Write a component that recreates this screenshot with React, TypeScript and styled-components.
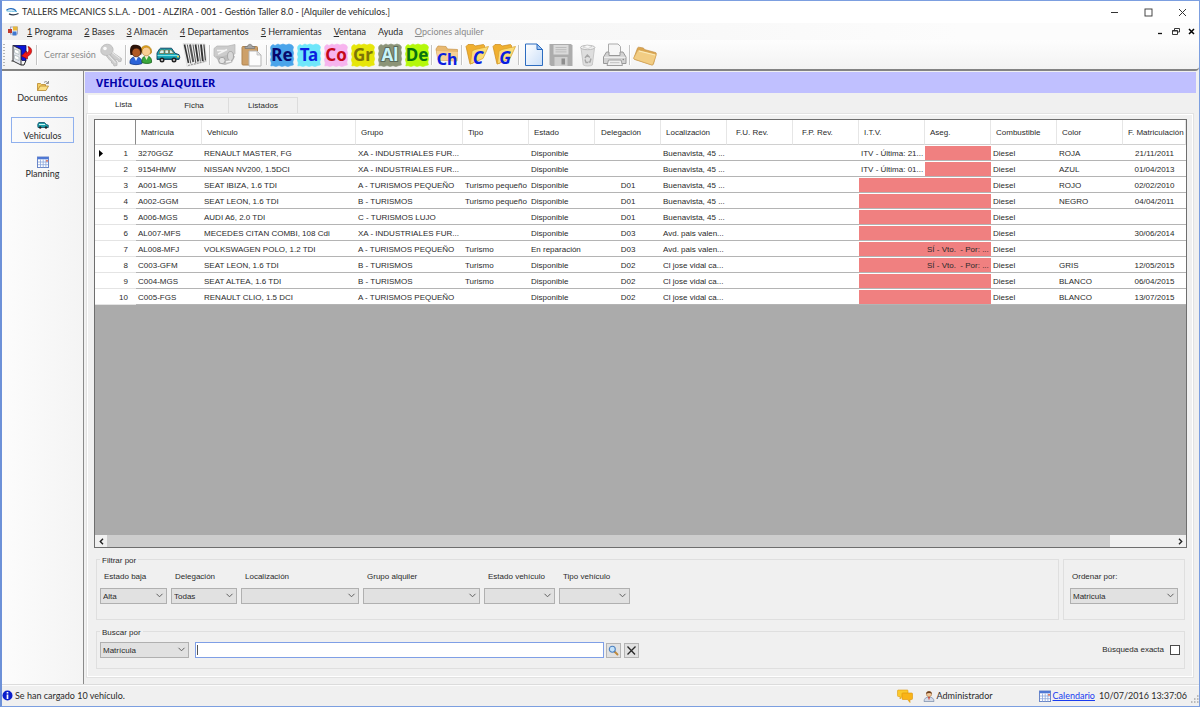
import React from "react";
import styled, { createGlobalStyle } from "styled-components";

const UI = '"Segoe UI", Lato, "Noto Sans", sans-serif';
const GRID = '"Microsoft Sans Serif", "Liberation Sans", Arial, sans-serif';
const COMIC = '"Comic Sans MS", "Noto Sans", sans-serif';

const GlobalStyle = createGlobalStyle`
  * { box-sizing: border-box; }
  body { margin: 0; background: #f0f0f0; color: #2a2a2a; font: 8px/12px ${GRID}; }
  button, input, select { font: inherit; color: inherit; margin: 0; }
  svg { display: block; overflow: visible; }
`;

const Window = styled.div`
  min-height: 100vh;
  display: flex;
  flex-direction: column;
  background: #f0f0f0;
  border: 1px solid #7c9fe0;
  border-left: 2px solid #6d91d8;
`;

/* ---------- title bar and menu ---------- */

const TitleBar = styled.header`
  height: 22px;
  display: flex;
  align-items: center;
  gap: 3px;
  padding-left: 4px;
  background: #fff;
  font-family: ${UI};
  font-size: 9px;
`;

const WindowTitle = styled.h1`
  flex: 1;
  margin: 0;
  font: inherit;
  white-space: nowrap;
`;

const Controls = styled.div<{ $gap: number; $pad: number }>`
  display: flex;
  align-items: center;
  gap: ${(p) => p.$gap}px;
  padding-right: ${(p) => p.$pad}px;
`;

const PlainButton = styled.button`
  display: flex;
  align-items: center;
  justify-content: center;
  padding: 0;
  border: 0;
  background: none;
`;

const MenuBar = styled.nav`
  height: 17px;
  display: flex;
  align-items: center;
  padding-left: 5px;
  background: linear-gradient(90deg, #f0f0f0, #fcfcfc 80%);
  font-family: ${UI};
  font-size: 9px;
`;

const MenuList = styled.div`
  flex: 1;
  display: flex;
  gap: 12px;
  padding-left: 8px;
`;

const MenuItem = styled.button`
  padding: 0;
  border: 0;
  background: none;
  white-space: nowrap;
  &:disabled { color: #8a8a8a; }
`;

/* ---------- toolbar ---------- */

const Toolbar = styled.div`
  height: 31px;
  display: flex;
  align-items: center;
  background: linear-gradient(#fdfdfd, #f3f3f3);
  border-bottom: 2px solid #838383;
  border-bottom-right-radius: 4px;
  font-family: ${UI};
  font-size: 9px;
`;

const Grip = styled.div`
  width: 2px;
  height: 22px;
  margin: 0 5px 0 1px;
  background: repeating-linear-gradient(#b4b4b4 0 1px, transparent 1px 3px);
`;

const ToolGroup = styled.div`
  display: flex;
  align-items: center;
  gap: 3px;
`;

const ToolButton = styled(PlainButton)`
  width: 24px;
  height: 26px;
`;

const ToolText = styled.button`
  padding: 0 3px 0 4px;
  border: 0;
  background: none;
  white-space: nowrap;
  &:disabled { color: #8a8a8a; }
`;

const Separator = styled.div`
  width: 2px;
  height: 20px;
  margin: 0 2px;
  background: #c4c4c4;
  border-right: 1px solid #fff;
`;

/* ---------- body ---------- */

const Body = styled.div`
  flex: 1;
  display: flex;
`;

const Sidebar = styled.nav`
  width: 82px;
  display: flex;
  flex-direction: column;
  gap: 12px;
  padding: 8px 9px;
  background: linear-gradient(90deg, #fcfcfc, #f4f4f4);
  border-right: 1px solid #8a8a8a;
  font-family: ${UI};
  font-size: 9px;
`;

const SideItem = styled.button<{ $active?: boolean }>`
  height: 26px;
  display: flex;
  flex-direction: column;
  align-items: center;
  justify-content: flex-end;
  padding: 0;
  border: 1px solid ${(p) => (p.$active ? "#8fb0ee" : "transparent")};
  background: none;
`;

const Main = styled.main`
  flex: 1;
  min-width: 0;
  display: flex;
  flex-direction: column;
  padding: 0 3px 7px 0;
`;

const Banner = styled.h2`
  height: 21px;
  display: flex;
  align-items: center;
  margin: 1px 0 2px 1px;
  padding-left: 11px;
  background: #c0c0ff;
  color: #0000a8;
  font: bold 11px/20px ${COMIC};
`;

const Tabs = styled.div`
  display: flex;
  align-items: flex-end;
  padding-left: 4px;
`;

const Tab = styled.button<{ $active?: boolean }>`
  width: ${(p) => (p.$active ? 72 : 69)}px;
  height: ${(p) => (p.$active ? 19 : 17)}px;
  padding: 0 0 ${(p) => (p.$active ? 1 : 0)}px;
  border: 1px solid ${(p) => (p.$active ? "#fff" : "#dcdcdc")};
  border-width: 1px 1px 0 0;
  background: ${(p) => (p.$active ? "#fff" : "#f0f0f0")};
`;

const TabPanel = styled.section`
  flex: 1;
  display: flex;
  flex-direction: column;
  gap: 11px;
  margin: 0 3px;
  padding: 4px 5px 7px 6px;
  border: 1px solid #fff;
  outline: 1px solid #e2e2e2;
`;

/* ---------- grid ---------- */

const GridBox = styled.div`
  flex: 1;
  display: flex;
  flex-direction: column;
  background: #ababab;
  border: 1px solid #6e6e6e;
`;

const GridBody = styled.div`
  flex: 1;
  overflow: hidden;
`;

const Table = styled.table`
  width: 100%;
  table-layout: fixed;
  border-collapse: separate;
  border-spacing: 0;
  background: #fff;
`;

const HeadCell = styled.th<{ $pad?: number }>`
  height: 25px;
  padding: 2px 0 0 ${(p) => p.$pad ?? 5}px;
  border-right: 1px solid #e6e6e6;
  border-bottom: 1px solid #d0d0d0;
  font-weight: normal;
  text-align: left;
  white-space: nowrap;
  overflow: hidden;
`;

const CornerCell = styled.td`
  border-right: 1px solid #8a8a8a;
  border-bottom: 1px solid #d0d0d0;
`;

const RowHead = styled.th`
  height: 16px;
  padding: 2px 0 0;
  border-bottom: 1px solid #e4e4e4;
  font-weight: normal;
`;

const RowHeadInner = styled.div`
  display: flex;
  align-items: center;
  justify-content: space-between;
  padding: 0 8px 0 4px;
`;

const Cell = styled.td<{ $center?: boolean; $alert?: boolean }>`
  height: 16px;
  padding: 2px 0 0 ${(p) => (p.$center ? 0 : 2)}px;
  border-bottom: 1px solid #b4b4b4;
  background: ${(p) => (p.$alert ? "#f08080" : "#fff")};
  background-clip: padding-box;
  box-shadow: inset 0 1px #fff;
  text-align: ${(p) => (p.$center ? "center" : "left")};
  white-space: pre;
  overflow: hidden;
`;

const ScrollBar = styled.div`
  height: 12px;
  display: flex;
  background: #f0f0f0;
`;

const ScrollArrow = styled(PlainButton)`
  width: 12px;
`;

const ScrollTrack = styled.div`
  flex: 1;
  display: flex;
`;

const ScrollThumb = styled.div`
  width: 94%;
  background: #cdcdcd;
`;

/* ---------- filter forms ---------- */

const FilterRow = styled.div`
  display: flex;
  gap: 4px;
  padding: 0 2px;
`;

const Group = styled.fieldset<{ $grow?: boolean }>`
  position: relative;
  flex: ${(p) => (p.$grow ? "1" : "none")};
  min-width: 0;
  margin: 0;
  border: 1px solid #dfdfdf;
  padding: 0 3px;
`;

const Legend = styled.legend`
  height: 0;
  padding: 0;
  margin-left: 1px;
`;

const LegendText = styled.span`
  position: absolute;
  top: -5px;
  left: 3px;
  padding: 0 2px;
  background: #f0f0f0;
`;

const FilterFields = styled.div`
  height: 59px;
  display: flex;
  gap: 4px;
  padding-top: 11px;
`;

const SearchFields = styled.div`
  height: 36px;
  display: flex;
  align-items: center;
  gap: 4px;
`;

const OrderFields = styled(FilterFields)`
  padding-left: 3px;
`;

const Field = styled.div<{ $w: number }>`
  width: ${(p) => p.$w}px;
  display: flex;
  flex-direction: column;
  gap: 5px;
`;

const FieldLabel = styled.label<{ $pad?: number }>`
  padding-left: ${(p) => p.$pad ?? 4}px;
  white-space: nowrap;
`;

const SelectWrap = styled.div<{ $w: number }>`
  position: relative;
  width: ${(p) => p.$w}px;
  svg { position: absolute; right: 4px; top: 5px; pointer-events: none; }
`;

const Select = styled.select`
  appearance: none;
  display: block;
  width: 100%;
  height: 16px;
  padding: 1px 14px 0 2px;
  border: 1px solid #b0b0b0;
  border-radius: 0;
  background: #e1e1e1;
`;

const SearchBox = styled.div`
  position: relative;
  width: 409px;
  margin-left: 2px;
  &::after {
    content: "";
    position: absolute;
    left: 2px;
    top: 3px;
    width: 1px;
    height: 10px;
    background: #555;
  }
`;

const SearchInput = styled.input`
  display: block;
  width: 100%;
  height: 16px;
  padding: 0 4px;
  border: 1px solid #7f9fe6;
  background: #fff;
  outline: none;
`;

const SearchButtons = styled.div`
  display: flex;
  gap: 3px;
  margin-left: -2px;
`;

const SmallButton = styled(PlainButton)`
  width: 15px;
  height: 15px;
  border: 1px solid #b4b4b4;
  background: #e1e1e1;
`;

const ExactLabel = styled.label`
  display: flex;
  align-items: center;
  gap: 6px;
  margin: 0 1px 0 auto;
  white-space: nowrap;
`;

const CheckBox = styled.input`
  appearance: none;
  width: 10px;
  height: 10px;
  border: 1px solid #4a4a4a;
  background: #fff;
`;

/* ---------- status bar ---------- */

const StatusBar = styled.footer`
  height: 22px;
  display: flex;
  align-items: center;
  border-top: 1px solid #dcdcdc;
  box-shadow: inset 0 1px #fcfcfc;
  font-family: ${UI};
  font-size: 9px;
  white-space: nowrap;
`;

const StatusItem = styled.div<{ $gap?: number }>`
  display: flex;
  align-items: center;
  gap: 2px;
  margin-right: ${(p) => p.$gap ?? 0}px;
  a { color: #1a3cf0; }
`;

const StatusSpacer = styled.div`
  flex: 1;
`;

const SizeGrip = styled.div`
  align-self: flex-end;
  padding: 0 0 2px 3px;
`;

/* ---------- icons ---------- */

const Svg = ({ s = 24, h, children, vb }: { s?: number; h?: number; vb?: string; children: React.ReactNode }) => (
  <svg width={s} height={h ?? s} viewBox={vb ?? `0 0 ${s} ${h ?? s}`} aria-hidden="true">
    {children}
  </svg>
);

const Chevron = () => (
  <svg width="7" height="5" viewBox="0 0 7 5" aria-hidden="true">
    <path d="M.5 .8 3.5 3.8 6.5 .8" fill="none" stroke="#606060" />
  </svg>
);

const AppLogo = () => (
  <Svg s={13} h={10}>
    <path d="M.5 3.200C3 1.200 7 1 10 3.800" fill="none" stroke="#1d66b8" strokeWidth="1.300" />
    <path d="M.5 3.800C3 4.500 8 4 11 4.500" fill="none" stroke="#57b4dd" strokeWidth="1" />
    <path d="M3 6.800c3 1.500 6 1.300 9.500-.3" fill="none" stroke="#25364c" strokeWidth="1.300" />
  </Svg>
);

const FormIcon = () => (
  <Svg s={12} h={11}>
    <rect x="3.500" y="1" width="7" height="7" fill="#eef3fb" stroke="#9a9ab0" strokeWidth=".8" />
    <rect x="6" y=".5" width="4.500" height="4" fill="#e8b83c" />
    <rect x="1" y="3" width="4" height="4" fill="#c0392b" />
    <rect x="5.500" y="5.500" width="4" height="4" fill="#3f78d0" />
  </Svg>
);

const DoorIcon = () => (
  <Svg>
    <path d="M3 2.500h13v15h-4z" fill="#0a14d8" stroke="#0a0a5a" strokeWidth=".8" />
    <path d="M3 2.500 11 6.500V22L3 18z" fill="#e4e6ee" stroke="#222" strokeWidth=".9" />
    <path d="M4.500 6l4.500 2v3.500L4.500 9.500zM4.500 12l4.500 2v3.500l-4.500-2z" fill="#fff" stroke="#9aa" strokeWidth=".6" />
    <path d="M3 18h-1.500M11 22h3l2-4.500" fill="none" stroke="#222" />
    <path d="M18 3.500c4.500 1 5.500 7-.5 10v2.500L11.500 13l5-5v2.300c2.500-1.200 3-3.800 1.500-6.800z" fill="#f01818" stroke="#8c0808" strokeWidth=".6" />
  </Svg>
);

const KeysIcon = () => (
  <Svg>
    <g fill="#cdcdcd" stroke="#b8b8b8" strokeWidth=".8">
      <path d="M13 9l9.500 6.500-.5 3-2.500.2-1-2-2 .3-6-6z" />
      <path d="M10 11l8 8v3.500l-3 .5-1-2.500-1.500-.5v-2l-1.500-.5-4-5z" />
      <path d="M2 6c1-5 8-6.500 11-2.500 3 4-.5 9-5 9S1 10 2 6z" />
    </g>
    <circle cx="6" cy="5.500" r="1.800" fill="#fafafa" />
    <path d="M9.500 12l7 8M13 9.500l8 6" stroke="#ececec" fill="none" />
  </Svg>
);

const PeopleIcon = () => (
  <Svg>
    <path d="M1 20.500c-.3-4.500 1.800-6.500 5.800-6.500s6.200 2 6.200 6.500c-3 1.500-9 1.500-12 0z" fill="#2a62d8" stroke="#123a8c" strokeWidth=".8" />
    <path d="M5 14l2 4 2-4z" fill="#f4f6ff" />
    <path d="M13 19.500c-.5-4.500 1.500-6.500 4.500-6.500s5.500 2 5 6.500c-2 1.300-7 1.300-9.500 0z" fill="#3aa63c" stroke="#18621c" strokeWidth=".8" />
    <path d="M15.500 13l2 4 2-4z" fill="#f7efcf" />
    <path d="M12 9C10.500 .5 23.500 .5 22.500 9.500 22 11 21 11 20 10z" fill="#e8a818" stroke="#a06c08" strokeWidth=".6" />
    <circle cx="17.300" cy="8.500" r="4.300" fill="#f9cf94" stroke="#a8701e" strokeWidth=".5" />
    <path d="M1.500 12C-.5 2 4 1.500 7 1.800S14 3 12.300 11.500z" fill="#2a1208" />
    <circle cx="7.300" cy="9.500" r="4.300" fill="#b05a26" stroke="#3a1808" strokeWidth=".6" />
  </Svg>
);

const CarIcon = () => (
  <Svg>
    <path d="M1 16.500V10l2.500-4 1-.8h11l3.500 5 4 1.500.8 2.500-.8 2.300z" fill="#18a8b8" stroke="#0b3c5c" strokeWidth=".9" />
    <path d="M3 10.500 4.500 7H8v3.500zM9 10.500V7h3.500v3.500zM13.500 10.500V7h1.800l2.500 3.500z" fill="#d8f2f0" stroke="#7a5a20" strokeWidth=".6" />
    <path d="M1.500 12.500h21" stroke="#7ee0e6" />
    <path d="M1 15.300h22" stroke="#0b5a6c" strokeWidth=".8" />
    <circle cx="6" cy="17" r="2.500" fill="#222" />
    <circle cx="18" cy="17" r="2.500" fill="#222" />
    <circle cx="6" cy="17" r="1.100" fill="#ccc" />
    <circle cx="18" cy="17" r="1.100" fill="#ccc" />
    <rect x="21" y="12.800" width="2" height="1.600" fill="#f2d04a" />
  </Svg>
);

const BarcodeIcon = () => (
  <Svg>
    <path d="M0 .5 22 1l1.500 17.500L4 23.500z" fill="#efefef" stroke="#d0d0d0" strokeWidth=".5" />
    <g stroke="#333" fill="none">
      <path d="M1.500 1.500l4 18.500" strokeWidth="1.600" />
      <path d="M4.300 1.500l3.500 19" strokeWidth=".8" />
      <path d="M7 1.500l3.300 17.500" strokeWidth="2" stroke="#555" />
      <path d="M10 1.500l2.800 18.500" strokeWidth=".8" />
      <path d="M12.500 1.500l2.600 17" strokeWidth="1.700" />
      <path d="M15.300 1.500l2.100 17" strokeWidth="1" stroke="#666" />
      <path d="M18 1.500l1.800 16.500" strokeWidth="1.900" />
      <path d="M20.900 1.500l1.500 16" strokeWidth="1.200" stroke="#444" />
    </g>
    <path d="M5 22.500l18-4.500" stroke="#999" strokeWidth="1.200" strokeDasharray="2 1" />
  </Svg>
);

const GrayKeyCarIcon = () => (
  <Svg>
    <path d="M1 5.500 4 3h11l7-1.500v9l-4 4-12 2.500-5-4z" fill="#cccccc" stroke="#b4b4b4" strokeWidth=".7" />
    <path d="M3 13l6 .5 9-3 4 3-3 6-7 2.500-6-1.500z" fill="#bdbdbd" />
    <circle cx="9" cy="17.500" r="3.200" fill="#e2e2e2" stroke="#a4a4a4" />
    <ellipse cx="17.500" cy="13" rx="3" ry="4.500" fill="#d8d8d8" stroke="#a8a8a8" />
    <path d="M4 7.500h8M5 11l9-4.500M13 19l5-1" stroke="#f4f4f4" strokeWidth="1.400" />
  </Svg>
);

const ClipboardIcon = () => (
  <Svg>
    <rect x="2" y="3.500" width="15.500" height="18.500" rx="1" fill="#cda069" stroke="#b08450" />
    <path d="M5 5.500V3.500h2.500C8 .6 12 .6 12.300 3.500h2.400v2z" fill="#a4a4a4" stroke="#777" strokeWidth=".7" />
    <path d="M9 8h8l4 4v11H9z" fill="#fcfcfc" stroke="#b6b6b6" />
    <path d="M17 8v4h4z" fill="#e4e4e4" stroke="#b6b6b6" strokeWidth=".7" />
  </Svg>
);

const LetterText = styled.text<{ $size: number; $slant?: boolean }>`
  font: ${(p) => (p.$slant ? "italic" : "normal")} bold ${(p) => p.$size}px ${COMIC};
  text-anchor: middle;
`;

const roughEdge =
  "M1 3 3 1.500 5 2.500 8 1 10 2 13 1 16 2 19 1 22 2 23.500 4 22.800 7 23.600 10 23 13 23.700 16 22.800 19 23.400 22 21 22.500 18 23.600 15 22.700 12 23.500 9 22.600 6 23.500 3 22.700 .8 23 1.300 20 .4 17 1.200 14 .4 11 1.200 8 .5 5z";

const LetterIcon = ({ text, bg, fg, halo }: { text: string; bg: string; fg: string; halo?: string }) => (
  <Svg>
    <path d={roughEdge} fill={bg} stroke={bg} strokeWidth=".6" />
    <LetterText $size={17} x="12" y="18" fill={fg} stroke={halo ?? "none"} strokeWidth={halo ? 2 : 0} paintOrder="stroke">
      {text}
    </LetterText>
  </Svg>
);

const OpenFolderIcon = ({ text }: { text: string }) => (
  <Svg>
    <path d="M1 3.500 3 1.500h5.500L10 3l8.500-1.500 1 1V10L8 20l-3 1z" fill="#f0b030" stroke="#c88a1c" strokeWidth=".7" />
    <path d="M7 8 10 6.500l13.500-3L18 15.500 5.500 21z" fill="#fbdd78" stroke="#d9a12c" strokeWidth=".7" />
    <LetterText $size={17} $slant x="13" y="21" fill="#0a1ee0">{text}</LetterText>
  </Svg>
);

const ChFolderIcon = () => (
  <Svg>
    <path d="M1 6 3 3l8 .5 1.500 2.500 10 .5L22 18l-19-1z" fill="#e9b970" stroke="#c9954a" strokeWidth=".7" />
    <path d="M1.500 8l21.500 1-1.500 9-18.500-1z" fill="#f5d096" />
    <LetterText $size={16} x="12" y="22" fill="#0a1ee0">Ch</LetterText>
  </Svg>
);

const NewDocIcon = () => (
  <Svg>
    <defs>
      <linearGradient id="doc" x1="0" y1="0" x2="1" y2="1">
        <stop offset="0" stopColor="#fff" />
        <stop offset="1" stopColor="#c9def8" />
      </linearGradient>
    </defs>
    <path d="M3.500 1h11.500l5.500 5.500v16h-17z" fill="url(#doc)" stroke="#2c6cc0" />
    <path d="M15 1v5.500h5.500z" fill="#9dc2f0" stroke="#2c6cc0" />
  </Svg>
);

const SaveIcon = () => (
  <Svg>
    <path d="M.5 1h21.500l1.500 1.500V23H2l-1.500-1.500z" fill="#acacac" />
    <rect x="4.500" y="2" width="15" height="9.500" fill="#dadada" />
    <path d="M6.500 4.500h11M6.500 6.700h11M6.500 8.900h11" stroke="#bcbcbc" />
    <rect x="5.500" y="14" width="13" height="9" fill="#cfcfcf" />
    <rect x="12.500" y="15.500" width="3.500" height="6" fill="#8e8e8e" />
  </Svg>
);

const TrashIcon = () => (
  <Svg>
    <path d="M5 5h13.500l-2.200 17c-2 1.300-7 1.300-9 0z" fill="#dedede" stroke="#c8c8c8" />
    <ellipse cx="11.700" cy="4.500" rx="7.200" ry="2.200" fill="#efefef" stroke="#bcbcbc" />
    <path d="M7 4l4-2 5 1.500-4 2z" fill="#f8f8f8" stroke="#bbb" strokeWidth=".5" />
    <path d="M9 15l2.300-3 2.500 2.500M9 16.500l1 3h2M15 15.500l-1 3.500h-1.500" fill="none" stroke="#a6a6a6" strokeWidth="1.400" />
  </Svg>
);

const PrinterIcon = () => (
  <Svg>
    <path d="M5.500 1h9.500l2.500 2.500v9h-12z" fill="#f6f6f6" stroke="#ababab" />
    <path d="M3.500 9h2.500v3.500h11V9h3l3 5v6.500H.5V14z" fill="#d2d2d2" stroke="#989898" />
    <path d="M1 14.300h21.500" stroke="#f4f4f4" />
    <path d="M5.500 17h12.500l1.500 5.500h-15.500z" fill="#efefef" stroke="#a0a0a0" />
    <path d="M7 19.700h9.500" stroke="#c0c0c0" />
    <circle cx="20.300" cy="16.500" r=".8" fill="#888" />
  </Svg>
);

const TanFolderIcon = () => (
  <Svg>
    <path d="M1 14.500 4.500 5c.4-.8 1-.9 2-.7l4 .7 1 1.500 11 3c.8.300 1 .9.700 1.700L20.500 21c-.4.900-1 1.200-2 .9L1.800 16.500c-1-.4-1.200-1-.8-2z" fill="#dca650" stroke="#bd8a40" strokeWidth=".6" />
    <path d="M1 14.500 4.700 7.500c.4-.7 1-.8 1.700-.5l16 4c.8.300 1 .9.600 1.600L20 21.200c-.5.700-1 .9-1.800.6L1.800 16.300c-.9-.4-1.200-1-.8-1.800z" fill="#f2cd84" stroke="#d2a254" strokeWidth=".6" />
    <path d="M6 8 22 12" stroke="#fdf0c4" strokeWidth=".9" />
  </Svg>
);

const SmallFolder = () => (
  <Svg s={14} h={12}>
    <path d="M1.500 10.500V3.500h3l1 1h4v2" fill="#f5cf62" stroke="#b8862c" strokeWidth=".8" />
    <path d="M1.500 10.500 4 6h8.500L10 10.500z" fill="#fbdf86" stroke="#b8862c" strokeWidth=".8" />
    <path d="M8 2.500c1.500-1.500 3-1 4 .5M12.500 1v2.500H10" fill="none" stroke="#777" strokeWidth=".8" />
  </Svg>
);

const SmallCar = () => (
  <Svg s={12} h={9}>
    <path d="M.8 5.500V3.200l1-1.700h5.700L9.300 3.500l2 .7v2.300H1z" fill="#1fa0a8" stroke="#0b4a66" strokeWidth=".8" />
    <path d="M2 3.500h6" stroke="#d0f4f6" />
    <circle cx="3.200" cy="6.500" r="1.200" fill="#222" />
    <circle cx="9" cy="6.500" r="1.200" fill="#222" />
  </Svg>
);

const CalendarIcon = () => (
  <Svg s={12}>
    <rect x=".5" y="1" width="11" height="10.500" fill="#fff" stroke="#6a86c8" />
    <rect x=".5" y="1" width="11" height="2.300" fill="#4f78d4" />
    <path d="M1 6h10M1 8.700h10M3.500 3.500v8M6.200 3.500v8M8.900 3.500v8" stroke="#8ba6dc" strokeWidth=".8" />
    <rect x="9" y="4" width="2" height="1.700" fill="#e0806a" />
  </Svg>
);

const MagnifierIcon = () => (
  <Svg s={11}>
    <path d="M6.500 6.500l3 3" stroke="#c08a3c" strokeWidth="1.900" strokeLinecap="round" />
    <circle cx="4.300" cy="4.300" r="3" fill="#c4e2fa" stroke="#4c80c0" strokeWidth="1.100" />
  </Svg>
);

const ClearIcon = () => (
  <Svg s={11}>
    <path d="M1.500 1.500l7.500 8M9.500 1.500l-8 8" stroke="#2a2a2a" strokeWidth="1.300" />
  </Svg>
);

const InfoIcon = () => (
  <Svg s={11}>
    <circle cx="5.500" cy="5.500" r="5" fill="#0a1ecc" />
    <path d="M5.500 2v1.600M5.500 4.600V9" stroke="#fff" strokeWidth="1.700" />
  </Svg>
);

const ChatIcon = () => (
  <Svg s={16} h={15}>
    <path d="M1 2h9c1 0 1 .5 1 1v4.500c0 1-.5 1-1 1H5L3 11V8.500H1.500c-1 0-1-.5-1-1V3c0-1 .5-1 .5-1z" fill="#fbc92c" stroke="#e09a10" strokeWidth=".6" />
    <path d="M6 5h8.500c1 0 1 .5 1 1v4.500c0 1-.5 1-1 1H13v3L10.500 11.500H6c-1 0-1-.5-1-1V6c0-1 .5-1 1-1z" fill="#f9b418" stroke="#dc9208" strokeWidth=".6" />
  </Svg>
);

const UserIcon = () => (
  <Svg s={12}>
    <path d="M1 11.500c0-3 2-4.500 5-4.500s5 1.500 5 4.500z" fill="#d4dbe8" stroke="#7688a8" strokeWidth=".7" />
    <path d="M5 7l1 3.500L7 7z" fill="#d04030" />
    <circle cx="6" cy="4" r="2.700" fill="#f3c79a" stroke="#9a6a3a" strokeWidth=".5" />
    <path d="M3.200 4C3 .2 9 .2 8.800 4 7.500 2.500 5 2.500 3.200 4z" fill="#6a4020" />
  </Svg>
);

const GripIcon = () => (
  <Svg s={9}>
    <path d="M7 1h1.500M4 4h1.500M7 4h1.500M1 7h1.500M4 7h1.500M7 7h1.500" stroke="#a8a8a8" strokeWidth="1.500" />
  </Svg>
);

/* ---------- data ---------- */

const menus: [string, string][] = [
  ["1", " Programa"],
  ["2", " Bases"],
  ["3", " Almacén"],
  ["4", " Departamentos"],
  ["5", " Herramientas"],
  ["V", "entana"],
  ["", "Ayuda"],
];

const columns: { name: string; width?: number; pad?: number }[] = [
  { name: "Matrícula", width: 66 },
  { name: "Vehículo", width: 154 },
  { name: "Grupo", width: 107 },
  { name: "Tipo", width: 66 },
  { name: "Estado", width: 66 },
  { name: "Delegación", width: 66, pad: 6 },
  { name: "Localización", width: 66 },
  { name: "F.U. Rev.", width: 66, pad: 9 },
  { name: "F.P. Rev.", width: 66, pad: 9 },
  { name: "I.T.V.", width: 66 },
  { name: "Aseg.", width: 66 },
  { name: "Combustible", width: 66 },
  { name: "Color", width: 66 },
  { name: "F. Matriculación" },
];

const CENTERED = [5, 13];

const street = "Buenavista, 45 ...";
const avenue = "Avd. pais valen...";
const jose = "Cl jose vidal ca...";
const fur = "XA - INDUSTRIALES FUR...";
const small = "A - TURISMOS PEQUEÑO";
const policy = "SÍ - Vto.  - Por: ...";

const rows: string[][] = [
  ["3270GGZ", "RENAULT MASTER, FG", fur, "", "Disponible", "", street, "", "", "ITV - Última: 21...", "", "Diesel", "ROJA", "21/11/2011"],
  ["9154HMW", "NISSAN NV200, 1.5DCI", fur, "", "Disponible", "", street, "", "", "ITV - Última: 01...", "", "Diesel", "AZUL", "01/04/2013"],
  ["A001-MGS", "SEAT IBIZA, 1.6 TDI", small, "Turismo pequeño", "Disponible", "D01", street, "", "", "", "", "Diesel", "ROJO", "02/02/2010"],
  ["A002-GGM", "SEAT LEON, 1.6 TDI", "B - TURISMOS", "Turismo pequeño", "Disponible", "D01", street, "", "", "", "", "Diesel", "NEGRO", "04/04/2011"],
  ["A006-MGS", "AUDI A6, 2.0 TDI", "C - TURISMOS LUJO", "", "Disponible", "D01", street, "", "", "", "", "Diesel", "", ""],
  ["AL007-MFS", "MECEDES CITAN COMBI, 108 Cdi", fur, "", "Disponible", "D03", avenue, "", "", "", "", "Diesel", "", "30/06/2014"],
  ["AL008-MFJ", "VOLKSWAGEN POLO, 1.2 TDI", small, "Turismo", "En reparación", "D03", avenue, "", "", "", policy, "Diesel", "", ""],
  ["C003-GFM", "SEAT LEON, 1.6 TDI", "B - TURISMOS", "Turismo", "Disponible", "D02", jose, "", "", "", policy, "Diesel", "GRIS", "12/05/2015"],
  ["C004-MGS", "SEAT ALTEA, 1.6 TDI", "B - TURISMOS", "Turismo", "Disponible", "D02", jose, "", "", "", "", "Diesel", "BLANCO", "06/04/2015"],
  ["C005-FGS", "RENAULT CLIO, 1.5 DCI", small, "", "Disponible", "D02", jose, "", "", "", "", "Diesel", "BLANCO", "13/07/2015"],
];

/* The I.T.V. cell turns red when it holds no inspection; the insurance cell always does here. */
const isAlert = (col: number, value: string) => col === 10 || (col === 9 && value === "");

const filters = [
  { id: "baja", label: "Estado baja", value: "Alta", width: 67 },
  { id: "deleg", label: "Delegación", value: "Todas", width: 66 },
  { id: "local", label: "Localización", value: "", width: 118 },
  { id: "grupo", label: "Grupo alquiler", value: "", width: 117 },
  { id: "estado", label: "Estado vehículo", value: "", width: 71 },
  { id: "tipo", label: "Tipo vehículo", value: "", width: 71 },
];

const letters = [
  { text: "Re", bg: "#4aa4ea", fg: "#08086c" },
  { text: "Ta", bg: "#6fe6fa", fg: "#0a1ee0" },
  { text: "Co", bg: "#f7b4ee", fg: "#c40818" },
  { text: "Gr", bg: "#e6e60a", fg: "#7c7408" },
  { text: "Al", bg: "#8c9478", fg: "#c8f4fa", halo: "#5c6a5c" },
  { text: "De", bg: "#b4f80a", fg: "#087010" },
];

const Dropdown = ({ id, value, width, label }: { id: string; value: string; width: number; label?: string }) => (
  <SelectWrap $w={width}>
    <Select id={id} defaultValue={value} aria-label={label}>
      <option>{value}</option>
    </Select>
    <Chevron />
  </SelectWrap>
);

export default function App() {
  return (
    <>
      <GlobalStyle />
      <Window>
        <TitleBar>
          <AppLogo />
          <WindowTitle>TALLERS MECANICS S.L.A. - D01 - ALZIRA - 001 - Gestión Taller 8.0 - [Alquiler de vehículos.]</WindowTitle>
          <Controls $gap={25} $pad={12}>
            <PlainButton aria-label="Minimizar">
              <Svg s={9}><path d="M1 4.500h7" stroke="#333" /></Svg>
            </PlainButton>
            <PlainButton aria-label="Maximizar">
              <Svg s={9}><rect x="1" y="1" width="7" height="7" fill="none" stroke="#333" strokeWidth=".9" /></Svg>
            </PlainButton>
            <PlainButton aria-label="Cerrar">
              <Svg s={9}><path d="M1 1l7 7M8 1l-7 7" stroke="#333" /></Svg>
            </PlainButton>
          </Controls>
        </TitleBar>

        <MenuBar aria-label="Menú">
          <FormIcon />
          <MenuList>
            {menus.map(([key, rest]) => (
              <MenuItem key={rest}><u>{key}</u>{rest}</MenuItem>
            ))}
            <MenuItem disabled><u>O</u>pciones alquiler</MenuItem>
          </MenuList>
          <Controls $gap={8} $pad={4}>
            <PlainButton aria-label="Minimizar ventana">
              <Svg s={7}><path d="M1 5.500h4" stroke="#111" strokeWidth="1.300" /></Svg>
            </PlainButton>
            <PlainButton aria-label="Restaurar ventana">
              <Svg s={8} h={7}><path d="M2.500 2.500v-2h5v3.500h-2M.5 2.500h5v4h-5zM.5 3h5" fill="none" stroke="#222" strokeWidth=".9" /></Svg>
            </PlainButton>
            <PlainButton aria-label="Cerrar ventana">
              <Svg s={7}><path d="M1 1l5 5M6 1L1 6" stroke="#000" strokeWidth="1.500" /></Svg>
            </PlainButton>
          </Controls>
        </MenuBar>

        <Toolbar>
          <Grip />
          <ToolButton aria-label="Salir"><DoorIcon /></ToolButton>
          <Separator />
          <ToolText disabled>Cerrar sesión</ToolText>
          <ToolButton aria-label="Llaves" disabled><KeysIcon /></ToolButton>
          <Separator />
          <ToolGroup>
            <ToolButton aria-label="Clientes"><PeopleIcon /></ToolButton>
            <ToolButton aria-label="Vehículos"><CarIcon /></ToolButton>
            <ToolButton aria-label="Artículos"><BarcodeIcon /></ToolButton>
          </ToolGroup>
          <Separator />
          <ToolGroup>
            <ToolButton aria-label="Entrega" disabled><GrayKeyCarIcon /></ToolButton>
            <ToolButton aria-label="Pegar"><ClipboardIcon /></ToolButton>
          </ToolGroup>
          <Separator />
          <ToolGroup>
            {letters.map((l) => (
              <ToolButton key={l.text}><LetterIcon {...l} /></ToolButton>
            ))}
          </ToolGroup>
          <Separator />
          <ToolButton><ChFolderIcon /></ToolButton>
          <Separator />
          <ToolGroup>
            <ToolButton><OpenFolderIcon text="C" /></ToolButton>
            <ToolButton><OpenFolderIcon text="G" /></ToolButton>
          </ToolGroup>
          <Separator />
          <ToolGroup>
            <ToolButton aria-label="Nuevo"><NewDocIcon /></ToolButton>
            <ToolButton aria-label="Guardar" disabled><SaveIcon /></ToolButton>
            <ToolButton aria-label="Eliminar" disabled><TrashIcon /></ToolButton>
            <ToolButton aria-label="Imprimir" disabled><PrinterIcon /></ToolButton>
          </ToolGroup>
          <Separator />
          <ToolButton aria-label="Carpeta"><TanFolderIcon /></ToolButton>
        </Toolbar>

        <Body>
          <Sidebar aria-label="Secciones">
            <SideItem><SmallFolder />Documentos</SideItem>
            <SideItem $active><SmallCar />Vehiculos</SideItem>
            <SideItem><CalendarIcon />Planning</SideItem>
          </Sidebar>

          <Main>
            <Banner>VEHÍCULOS ALQUILER</Banner>
            <Tabs role="tablist">
              <Tab role="tab" aria-selected $active>Lista</Tab>
              <Tab role="tab">Ficha</Tab>
              <Tab role="tab">Listados</Tab>
            </Tabs>
            <TabPanel role="tabpanel">
              <GridBox>
                <GridBody>
                  <Table>
                    <colgroup>
                      <col width={41} />
                      {columns.map((c) => <col key={c.name} width={c.width} />)}
                    </colgroup>
                    <thead>
                      <tr>
                        <CornerCell />
                        {columns.map((c) => <HeadCell key={c.name} scope="col" $pad={c.pad}>{c.name}</HeadCell>)}
                      </tr>
                    </thead>
                    <tbody>
                      {rows.map((row, r) => (
                        <tr key={row[0]}>
                          <RowHead scope="row">
                            <RowHeadInner>
                              <Svg s={5} h={7}>{r === 0 && <path d="M0 0l4 3.500L0 7z" fill="#000" />}</Svg>
                              {r + 1}
                            </RowHeadInner>
                          </RowHead>
                          {row.map((value, c) => (
                            <Cell key={c} $center={CENTERED.includes(c)} $alert={isAlert(c, value)}>{value}</Cell>
                          ))}
                        </tr>
                      ))}
                    </tbody>
                  </Table>
                </GridBody>
                <ScrollBar>
                  <ScrollArrow aria-label="Desplazar a la izquierda">
                    <Svg s={5} h={7}><path d="M4 .8 1.300 3.500 4 6.200" fill="none" stroke="#222" strokeWidth="1.400" /></Svg>
                  </ScrollArrow>
                  <ScrollTrack><ScrollThumb /></ScrollTrack>
                  <ScrollArrow aria-label="Desplazar a la derecha">
                    <Svg s={5} h={7}><path d="M1 .8 3.700 3.500 1 6.200" fill="none" stroke="#222" strokeWidth="1.400" /></Svg>
                  </ScrollArrow>
                </ScrollBar>
              </GridBox>

              <FilterRow>
                <Group $grow>
                  <Legend><LegendText>Filtrar por</LegendText></Legend>
                  <FilterFields>
                    {filters.map((f) => (
                      <Field key={f.id} $w={f.width}>
                        <FieldLabel htmlFor={f.id}>{f.label}</FieldLabel>
                        <Dropdown id={f.id} value={f.value} width={f.width} />
                      </Field>
                    ))}
                  </FilterFields>
                </Group>
                <Group>
                  <OrderFields>
                    <Field $w={111}>
                      <FieldLabel htmlFor="orden" $pad={2}>Ordenar por:</FieldLabel>
                      <Dropdown id="orden" value="Matricula" width={108} />
                    </Field>
                  </OrderFields>
                </Group>
              </FilterRow>

              <FilterRow>
                <Group $grow>
                  <Legend><LegendText>Buscar por</LegendText></Legend>
                  <SearchFields>
                    <Dropdown id="campo" value="Matrícula" width={89} label="Buscar por" />
                    <SearchBox><SearchInput type="text" aria-label="Texto a buscar" /></SearchBox>
                    <SearchButtons>
                      <SmallButton aria-label="Buscar"><MagnifierIcon /></SmallButton>
                      <SmallButton aria-label="Limpiar"><ClearIcon /></SmallButton>
                    </SearchButtons>
                    <ExactLabel>Búsqueda exacta<CheckBox type="checkbox" /></ExactLabel>
                  </SearchFields>
                </Group>
              </FilterRow>
            </TabPanel>
          </Main>
        </Body>

        <StatusBar>
          <StatusItem><InfoIcon />Se han cargado 10 vehículo.</StatusItem>
          <StatusSpacer />
          <StatusItem $gap={10}><ChatIcon /></StatusItem>
          <StatusItem $gap={46}><UserIcon />Administrador</StatusItem>
          <StatusItem $gap={4}><CalendarIcon /><a href="#calendario">Calendario</a></StatusItem>
          <StatusItem>10/07/2016 13:37:06</StatusItem>
          <SizeGrip><GripIcon /></SizeGrip>
        </StatusBar>
      </Window>
    </>
  );
}
